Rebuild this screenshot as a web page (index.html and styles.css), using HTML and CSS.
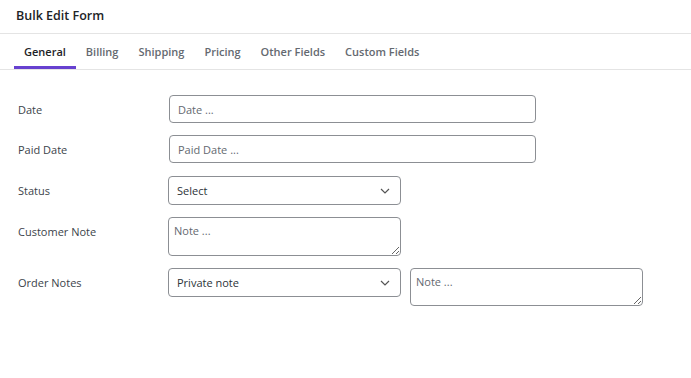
FILE: index.html
```html
<!DOCTYPE html>
<html>
<head>
<meta charset="utf-8">
<link rel="stylesheet" href="styles.css">
</head>
<body>
<div class="panel">
  <div class="header">Bulk Edit Form</div>
  <nav class="tabs">
    <span class="tab active">General</span>
    <span class="tab">Billing</span>
    <span class="tab">Shipping</span>
    <span class="tab">Pricing</span>
    <span class="tab">Other Fields</span>
    <span class="tab">Custom Fields</span>
  </nav>
  <form class="form">
    <div class="row">
      <label class="label">Date</label>
      <input class="input wide" type="text" placeholder="Date ...">
    </div>
    <div class="row">
      <label class="label">Paid Date</label>
      <input class="input wide" type="text" placeholder="Paid Date ...">
    </div>
    <div class="row spaced">
      <label class="label">Status</label>
      <select class="select"><option>Select</option></select>
    </div>
    <div class="row">
      <label class="label">Customer Note</label>
      <textarea class="textarea" placeholder="Note ..."></textarea>
    </div>
    <div class="row">
      <label class="label">Order Notes</label>
      <div class="controls">
        <select class="select"><option>Private note</option></select>
        <textarea class="textarea tall" placeholder="Note ..."></textarea>
      </div>
    </div>
  </form>
</div>
</body>
</html>
```
FILE: styles.css
```css
* { box-sizing: border-box; }
html, body { margin: 0; background: #fff; }
body {
  font-family: "Open Sans", "Noto Sans", sans-serif;
  font-size: 11px;
  color: #3c434a;
}
.header {
  height: 34px;
  padding: 7px 16px 0;
  font-size: 12.5px;
  font-weight: 600;
  color: #1d2327;
  border-bottom: 1px solid #e4e4e4;
}
.tabs {
  display: flex;
  padding-left: 14px;
  border-bottom: 1px solid #e4e4e4;
  height: 36px;
}
.tab {
  padding: 10px 10px 0;
  height: 35px;
  line-height: 16px;
  font-weight: 600;
  color: #646970;
  border-bottom: 3px solid transparent;
}
.tab.active {
  color: #1d2327;
  border-bottom-color: #6741d0;
}
.form {
  padding: 25px 0 0 18px;
  display: flex;
  flex-direction: column;
  gap: 12px;
}
.row {
  display: flex;
  align-items: flex-start;
}
.row.spaced { margin-top: 1px; }
.label {
  width: 150px;
  height: 28px;
  line-height: 26px;
  padding-top: 2px;
  color: #3c434a;
}
.input, .select, .textarea {
  font-family: inherit;
  font-size: 11px;
  color: #2c3338;
  border: 1px solid #8c8f94;
  border-radius: 4px;
  background: #fff;
  margin: 0;
  outline: none;
}
.input {
  height: 28px;
  padding: 0 8px;
}
.input.wide { width: 367px; margin-left: 1px; }
.input::placeholder, .textarea::placeholder { color: #646970; }
.select {
  appearance: none;
  -webkit-appearance: none;
  width: 233px;
  height: 29px;
  padding: 0 24px 0 8px;
  background-image: url("data:image/svg+xml,%3Csvg xmlns='http://www.w3.org/2000/svg' width='10' height='6' viewBox='0 0 10 6'%3E%3Cpath d='M1 1l4 4 4-4' fill='none' stroke='%23555' stroke-width='1.2'/%3E%3C/svg%3E");
  background-repeat: no-repeat;
  background-position: right 10px center;
}
.textarea {
  width: 233px;
  height: 39px;
  padding: 5px 5px;
  resize: both;
  display: block;
}
.textarea.tall { height: 38px; }
.controls {
  display: flex;
  gap: 9px;
  align-items: flex-start;
}
```
